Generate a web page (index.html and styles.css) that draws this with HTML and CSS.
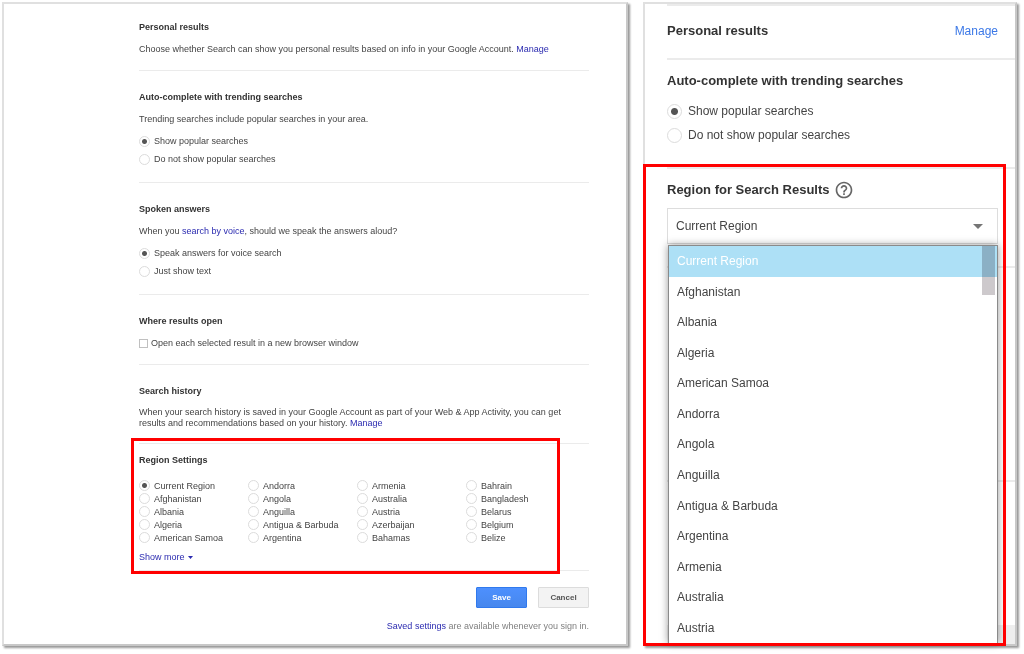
FILE: index.html
```html
<!DOCTYPE html>
<html lang="en">
<head>
<meta charset="utf-8">
<title>Search settings</title>
<link rel="stylesheet" href="styles.css">
</head>
<body>
<main class="page">
  <form class="panel desktop">
    <section class="group">
      <h2>Personal results</h2>
      <p>Choose whether Search can show you personal results based on info in your Google Account. <a href="#">Manage</a></p>
    </section>
    <section class="group">
      <h2>Auto-complete with trending searches</h2>
      <p>Trending searches include popular searches in your area.</p>
      <div class="choices">
        <label class="choice"><input type="radio" name="popular" checked>Show popular searches</label>
        <label class="choice"><input type="radio" name="popular">Do not show popular searches</label>
      </div>
    </section>
    <section class="group">
      <h2>Spoken answers</h2>
      <p>When you <a href="#">search by voice</a>, should we speak the answers aloud?</p>
      <div class="choices">
        <label class="choice"><input type="radio" name="spoken" checked>Speak answers for voice search</label>
        <label class="choice"><input type="radio" name="spoken">Just show text</label>
      </div>
    </section>
    <section class="group window-group">
      <h2>Where results open</h2>
      <label class="choice"><input type="checkbox">Open each selected result in a new browser window</label>
    </section>
    <section class="group history-group">
      <h2>Search history</h2>
      <p>When your search history is saved in your Google Account as part of your Web &amp; App Activity, you can get results and recommendations based on your history. <a href="#">Manage</a></p>
    </section>
    <section class="group region-group">
      <h2>Region Settings</h2>
      <div class="regions">
        <label class="choice"><input type="radio" name="region" checked>Current Region</label>
        <label class="choice"><input type="radio" name="region">Afghanistan</label>
        <label class="choice"><input type="radio" name="region">Albania</label>
        <label class="choice"><input type="radio" name="region">Algeria</label>
        <label class="choice"><input type="radio" name="region">American Samoa</label>
        <label class="choice"><input type="radio" name="region">Andorra</label>
        <label class="choice"><input type="radio" name="region">Angola</label>
        <label class="choice"><input type="radio" name="region">Anguilla</label>
        <label class="choice"><input type="radio" name="region">Antigua &amp; Barbuda</label>
        <label class="choice"><input type="radio" name="region">Argentina</label>
        <label class="choice"><input type="radio" name="region">Armenia</label>
        <label class="choice"><input type="radio" name="region">Australia</label>
        <label class="choice"><input type="radio" name="region">Austria</label>
        <label class="choice"><input type="radio" name="region">Azerbaijan</label>
        <label class="choice"><input type="radio" name="region">Bahamas</label>
        <label class="choice"><input type="radio" name="region">Bahrain</label>
        <label class="choice"><input type="radio" name="region">Bangladesh</label>
        <label class="choice"><input type="radio" name="region">Belarus</label>
        <label class="choice"><input type="radio" name="region">Belgium</label>
        <label class="choice"><input type="radio" name="region">Belize</label>
      </div>
      <a class="more" href="#">Show more <svg width="5" height="3" viewBox="0 0 5 3" aria-hidden="true"><path d="M0 0h5L2.500 3z" fill="currentColor"/></svg></a>
      <div class="highlight"></div>
    </section>
    <div class="actions">
      <button type="submit" class="save">Save</button>
      <button type="button" class="cancel">Cancel</button>
    </div>
    <p class="note"><a href="#">Saved settings</a> are available whenever you sign in.</p>
  </form>

  <form class="panel mobile">
    <section class="row personal">
      <h2>Personal results</h2>
      <a href="#">Manage</a>
    </section>
    <section class="row trending">
      <h2>Auto-complete with trending searches</h2>
      <label class="choice"><input type="radio" name="m-popular" checked>Show popular searches</label>
      <label class="choice"><input type="radio" name="m-popular">Do not show popular searches</label>
    </section>
    <div class="region-area">
      <section class="row region">
        <h2><label for="region-select">Region for Search Results</label>
          <svg class="help" width="20" height="20" viewBox="0 0 24 24" aria-hidden="true"><path fill="#666" d="M11 18h2v-2h-2v2zm1-16C6.480 2 2 6.480 2 12s4.480 10 10 10 10-4.480 10-10S17.520 2 12 2zm0 18c-4.410 0-8-3.590-8-8s3.590-8 8-8 8 3.590 8 8-3.590 8-8 8zm0-14c-2.210 0-4 1.790-4 4h2c0-1.100.9-2 2-2s2 .9 2 2c0 2-3 1.750-3 5h2c0-2.250 3-2.500 3-5 0-2.210-1.790-4-4-4z"/></svg>
        </h2>
        <div class="picker">
          <select id="region-select"><option>Current Region</option></select>
          <svg class="arrow" width="10" height="5" viewBox="0 0 10 5" aria-hidden="true"><path d="M0 0h10L5 5z" fill="#757575"/></svg>
        </div>
      </section>
      <div class="row covered"></div>
      <div class="row covered-end"></div>
      <div class="base"></div>
      <ul class="list" role="listbox">
        <li class="current" role="option" aria-selected="true">Current Region</li>
        <li role="option">Afghanistan</li>
        <li role="option">Albania</li>
        <li role="option">Algeria</li>
        <li role="option">American Samoa</li>
        <li role="option">Andorra</li>
        <li role="option">Angola</li>
        <li role="option">Anguilla</li>
        <li role="option">Antigua &amp; Barbuda</li>
        <li role="option">Argentina</li>
        <li role="option">Armenia</li>
        <li role="option">Australia</li>
        <li role="option">Austria</li>
      </ul>
      <div class="thumb"></div>
      <div class="highlight"></div>
    </div>
  </form>
</main>
</body>
</html>
```

FILE: styles.css
```css
* { box-sizing: border-box; }

body {
  margin: 0;
  background: #fff;
  color: #444;
  font-family: "Liberation Sans", Arial, sans-serif;
}

h2, p, ul { margin: 0; padding: 0; }
h2 { color: #333; font-weight: bold; }
a { color: #2b2bb0; text-decoration: none; }

.page {
  display: grid;
  grid-template-columns: 626fr 374fr;
  gap: 15px;
  padding: 2px 7px 7px 2px;
}

.panel {
  border: 2px solid #e0e0e0;
  border-right-color: #c8c8c8;
  border-bottom-color: #c8c8c8;
  box-shadow: 2px 2px 2px #999;
}

/* Shared controls */
.choice {
  display: flex;
  align-items: center;
  gap: 4px;
}

input {
  appearance: none;
  flex: none;
  width: 11px;
  height: 11px;
  margin: 0;
  border: 1px solid #dcdcdc;
  background: #fff;
}

input[type="radio"] { border-radius: 50%; }
input[type="radio"]:checked {
  background: radial-gradient(circle, #555 2px, #fff 3px);
}
input[type="checkbox"] {
  width: 9px;
  height: 9px;
  border-color: #c0c0c0;
}

.highlight {
  position: absolute;
  border: 3px solid #f00;
  pointer-events: none;
}

/* Desktop settings */
.desktop {
  padding: 0 37px 12px 135px;
  font-size: 9px;
  line-height: 12px;
}

.desktop h2 {
  margin-bottom: 10px;
  font-size: 9px;
  line-height: 12px;
}

.group {
  padding: 20px 0 14px;
  border-bottom: 1px solid #ebebeb;
}
.group:first-child { padding: 17px 0 15px; }

.choices { margin-top: 7px; }
.group > .choice,
.choices .choice { height: 18px; }

.window-group { padding-bottom: 12px; }
.window-group h2 { margin-bottom: 7px; }
.window-group .choice { gap: 3px; }

.history-group p { line-height: 11px; }

.region-group {
  position: relative;
  padding: 10px 0 7px;
}
.region-group h2 { margin-bottom: 13px; }
.region-group .highlight { inset: -6px 29px -4px -8px; }

.regions {
  display: grid;
  grid-template-rows: repeat(5, 13px);
  grid-template-columns: repeat(4, 1fr);
  grid-auto-flow: column;
  margin-right: 14px;
}

.more {
  display: flex;
  align-items: center;
  gap: 3px;
  margin-top: 7px;
}

.actions {
  display: flex;
  justify-content: flex-end;
  gap: 11px;
  margin: 16px 0 12px;
}

button {
  width: 51px;
  height: 21px;
  padding: 0;
  border: 1px solid #dcdcdc;
  border-radius: 1px;
  background: #f3f3f3;
  color: #555;
  font: bold 8px/12px "Liberation Sans", Arial, sans-serif;
}

.save {
  border-color: #3079ed;
  background: linear-gradient(#4d90fe, #4787ed);
  color: #fff;
}

.note {
  color: #808080;
  text-align: right;
}

/* Mobile settings */
.mobile {
  display: flex;
  flex-direction: column;
  padding-left: 22px;
  font-size: 12px;
  line-height: 16px;
}

.mobile h2 { font-size: 13px; line-height: 16px; }
.mobile .choice { height: 24px; gap: 6px; }
.mobile input { width: 15px; height: 15px; }
.mobile input:checked { background: radial-gradient(circle, #555 3px, #fff 4px); }

.row { border-bottom: 2px solid #ebebeb; }

.personal {
  display: flex;
  justify-content: space-between;
  padding: 17px 17px 19px 0;
  border-top: 2px solid #ebebeb;
}
.personal a { color: #3b78e7; }

.trending { padding: 13px 0 20px; }
.trending h2 { margin-bottom: 10px; }

.region-area {
  display: flex;
  flex: 1;
  flex-direction: column;
  position: relative;
}
.region-area .highlight { inset: -5px 9px -2px -24px; }

.region { padding: 11px 17px 22px 0; }
.region h2 {
  display: flex;
  align-items: center;
  gap: 4px;
  height: 20px;
}

.picker {
  display: flex;
  align-items: center;
  position: relative;
  margin-top: 8px;
}

select {
  appearance: none;
  width: 100%;
  height: 36px;
  padding: 0 8px;
  border: 1px solid #ddd;
  border-radius: 0;
  background: #fff;
  color: #444;
  font: 12px/16px "Liberation Sans", Arial, sans-serif;
}

.arrow {
  position: absolute;
  right: 15px;
}

.covered { height: 214px; }
.covered-end { flex: 1; border: 0; }
.base { height: 19px; background: #eee; }

.list {
  display: flex;
  flex-direction: column;
  position: absolute;
  inset: 76px 17px 1px 1px;
  border: 1px solid #8a8a8a;
  border-bottom: 0;
  background: #fff;
  box-shadow: 0 0 8px rgba(0, 0, 0, .4);
  list-style: none;
}

.list li {
  display: flex;
  flex: 1;
  align-items: center;
  padding: 0 8px;
}
.list .current { background: #ade0f6; color: #fff; }

.thumb {
  position: absolute;
  top: 77px;
  right: 20px;
  width: 13px;
  height: 49px;
  background: #cdc9cc;
  mix-blend-mode: multiply;
}
```
